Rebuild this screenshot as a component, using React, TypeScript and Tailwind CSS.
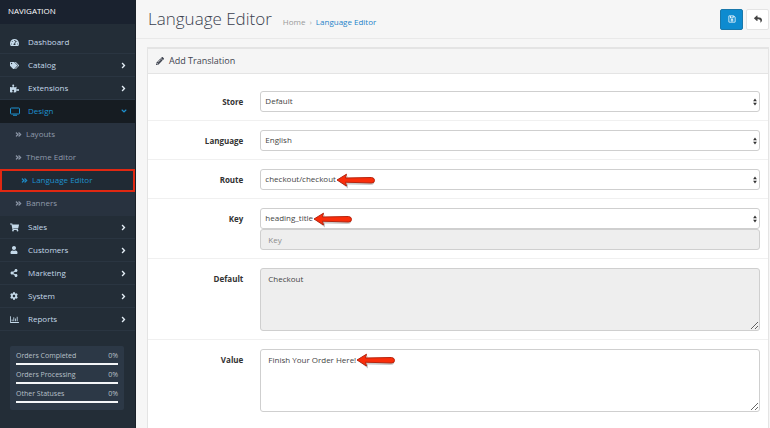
import type { ReactNode } from "react";
import {
  FaAngleDoubleRight,
  FaAngleDown,
  FaAngleRight,
  FaCog,
  FaPencilAlt,
  FaPuzzlePiece,
  FaRegChartBar,
  FaRegSave,
  FaReply,
  FaShareAlt,
  FaShoppingCart,
  FaTachometerAlt,
  FaTags,
  FaUser,
} from "react-icons/fa";

const field =
  "block w-full rounded-[3px] border border-[#cfcfcf] text-[8px] text-[#444] outline-none";

function Monitor() {
  return (
    <svg viewBox="0 0 20 18" className="h-[9px] w-[10px]" fill="none" stroke="currentColor" strokeWidth="2">
      <rect x="1" y="2" width="18" height="12" rx="1.5" />
      <path d="M6 16.5h8" />
    </svg>
  );
}

function NavItem({ icon, label, arrow = true, active = false }: { icon: ReactNode; label: string; arrow?: boolean; active?: boolean }) {
  return (
    <a
      href="#"
      className={
        "flex h-[23px] items-center border-b pl-[10px] pr-[7px] text-[8px] " +
        (active ? "border-[#161c22] bg-[#161c22] text-[#1e91cf]" : "border-[#2a3541] text-[#c4d9e9]")
      }
    >
      <span className="flex w-[18px] shrink-0 text-[9px]">{icon}</span>
      <span className="flex-1 font-medium">{label}</span>
      {arrow && (active ? <FaAngleDown className="size-2" /> : <FaAngleRight className="size-[9px] text-[#e3edf5]" />)}
    </a>
  );
}

function SubArrow() {
  return <FaAngleDoubleRight className="mt-[2px] size-[7px]" stroke="currentColor" strokeWidth="20" />;
}

function SubItem({ label }: { label: string }) {
  return (
    <a href="#" className="flex h-[23px] items-center gap-1 pb-[2px] pl-[15px] text-[8px] text-[#8f9aab]">
      <SubArrow />
      {label}
    </a>
  );
}

function Stat({ label }: { label: string }) {
  return (
    <div>
      <div className="flex h-[13px] items-center justify-between text-[7px] text-[#b8c0c8]">
        <span>{label}</span>
        <span>0%</span>
      </div>
      <div className="h-[2px] bg-[#f3f5f7]" />
    </div>
  );
}

function Pointer() {
  return (
    <svg viewBox="0 0 42 18" className="h-[18px] w-[42px] shrink-0 overflow-visible">
      <path d="M3 10.500L12 5L11 8L35 9Q39 9.500 38 12.500Q37 14 34 14L12 13.500L12 17.500Z" fill="#777" opacity=".4" />
      <path
        d="M1 9L10.500 3.200L9.500 7L35.500 6.500Q38.500 6.800 38.500 9.400Q38.500 12 35.500 12L9.500 11.200L10.500 15Z"
        fill="#fa2d0a"
        stroke="#b5250f"
        strokeWidth="1"
        strokeLinejoin="round"
      />
    </svg>
  );
}

function Annotated({ text, pad, children }: { text: string; pad: string; children: ReactNode }) {
  return (
    <div className="relative">
      {children}
      <div aria-hidden="true" className={"pointer-events-none absolute left-0 top-0 flex h-[22px] items-center gap-px text-[8px] " + pad}>
        <span className="invisible">{text}</span>
        <Pointer />
      </div>
    </div>
  );
}

function Select({ id, value }: { id: string; value: string }) {
  return (
    <div className="relative">
      <select id={id} defaultValue={value} className={field + " h-[21px] appearance-none bg-white pb-px pl-[4px] pr-4"}>
        <option>{value}</option>
      </select>
      <svg viewBox="0 0 4 8" className="pointer-events-none absolute right-[3px] top-[7px] h-2 w-1" fill="#333">
        <path d="M2 0.500L3.900 3.200H0.100ZM2 7.500L0.100 4.800H3.900Z" />
      </svg>
    </div>
  );
}

function Row({ id, label, last = false, children }: { id: string; label: string; last?: boolean; children: ReactNode }) {
  return (
    <div className={"flex pb-2 pt-[9px] " + (last ? "" : "border-b border-[#f0f0f0]")}>
      <label htmlFor={id} className="w-1/6 pr-2 pt-[4px] text-right text-[8px] font-bold leading-[13px] text-[#333]">
        {label}
      </label>
      <div className="flex-1 pl-[9px] pr-2">{children}</div>
    </div>
  );
}

export default function App() {
  return (
    <div className="flex h-screen overflow-hidden bg-[#f6f6f6] font-['Open_Sans','Noto_Sans',sans-serif]">
      <nav className="w-[136px] shrink-0 border-r border-[#1a2129] bg-[#232d37]">
        <div className="mb-[7px] flex h-6 items-center bg-[#1a222f] pl-2 text-[8px] leading-[12px] text-white">
          <span className="pb-[3px] font-medium">NAVIGATION</span>
        </div>
        <NavItem icon={<FaTachometerAlt />} label="Dashboard" arrow={false} />
        <NavItem icon={<FaTags />} label="Catalog" />
        <NavItem icon={<FaPuzzlePiece />} label="Extensions" />
        <NavItem icon={<Monitor />} label="Design" active />
        <div className="bg-[#28323f] pb-px">
          <SubItem label="Layouts" />
          <SubItem label="Theme Editor" />
          <a
            href="#"
            className="flex h-[23px] items-center gap-1 border-2 border-[#e02812] bg-[#202a34] pb-[2px] pl-[19px] text-[8px] font-medium text-[#1e91cf]"
          >
            <SubArrow />
            Language Editor
          </a>
          <SubItem label="Banners" />
        </div>
        <NavItem icon={<FaShoppingCart />} label="Sales" />
        <NavItem icon={<FaUser className="size-2" />} label="Customers" />
        <NavItem icon={<FaShareAlt className="size-2" />} label="Marketing" />
        <NavItem icon={<FaCog className="size-2" />} label="System" />
        <NavItem icon={<FaRegChartBar />} label="Reports" />
        <div className="ml-[10px] mr-[11px] mt-[15px] flex flex-col gap-1 rounded-[2px] bg-[#2c3846] px-[6px] pb-[7px] pt-[4px]">
          <Stat label="Orders Completed" />
          <Stat label="Orders Processing" />
          <Stat label="Other Statuses" />
        </div>
      </nav>

      <main className="min-w-0 flex-1">
        <header className="flex h-[39px] items-center border-b border-[#e9e9e9] pl-3 pr-[1px]">
          <h1 className="text-[17px] font-light leading-6 text-[#3a3f4f]">Language Editor</h1>
          <div className="ml-[11px] flex flex-1 items-center gap-1 pt-[5px] text-[8px] leading-3">
            <a href="#" className="text-[#999]">Home</a>
            <span className="text-[#aaa]">›</span>
            <a href="#" className="text-[#1e83c9]">Language Editor</a>
          </div>
          <button type="button" aria-label="Save" className="mr-[3px] flex h-[21px] w-[23px] items-center justify-center rounded-[2px] border border-[#1978ab] bg-[#0d8bd0] text-[8px] text-white">
            <FaRegSave />
          </button>
          <button type="button" aria-label="Back" className="flex h-[21px] w-[23px] items-center justify-center rounded-[2px] border border-[#e4e4e4] bg-white text-[8px] text-[#444]">
            <FaReply />
          </button>
        </header>

        <section className="ml-[11px] mr-[1px] mt-2 min-h-screen border border-t-2 border-[#e4e4e4] bg-white">
          <h2 className="flex h-[25px] items-center gap-[5px] border-b border-[#e4e4e4] bg-[#f5f5f5] pl-2 text-[9px] text-[#3f4450]">
            <FaPencilAlt className="size-2" />
            Add Translation
          </h2>
          <form className="pt-2">
            <Row id="store" label="Store">
              <Select id="store" value="Default" />
            </Row>
            <Row id="language" label="Language">
              <Select id="language" value="English" />
            </Row>
            <Row id="route" label="Route">
              <Annotated text="checkout/checkout" pad="pl-[4px]">
                <Select id="route" value="checkout/checkout" />
              </Annotated>
            </Row>
            <Row id="key" label="Key">
              <Annotated text="heading_title" pad="pl-[4px]">
                <Select id="key" value="heading_title" />
              </Annotated>
              <input aria-label="Key" placeholder="Key" disabled className={field + " h-[21px] bg-[#eee] px-[7px] placeholder:text-[#8c8c8c]"} />
            </Row>
            <Row id="default" label="Default">
              <textarea id="default" disabled defaultValue="Checkout" className={field + " h-[63px] resize bg-[#eee] px-[7px] py-[3px] leading-[13px]"} />
            </Row>
            <Row id="value" label="Value" last>
              <Annotated text="Finish Your Order Here!" pad="pl-[7px]">
                <textarea id="value" defaultValue="Finish Your Order Here!" className={field + " h-[63px] resize bg-white px-[7px] py-[3px] leading-[13px]"} />
              </Annotated>
            </Row>
          </form>
        </section>
      </main>
    </div>
  );
}
